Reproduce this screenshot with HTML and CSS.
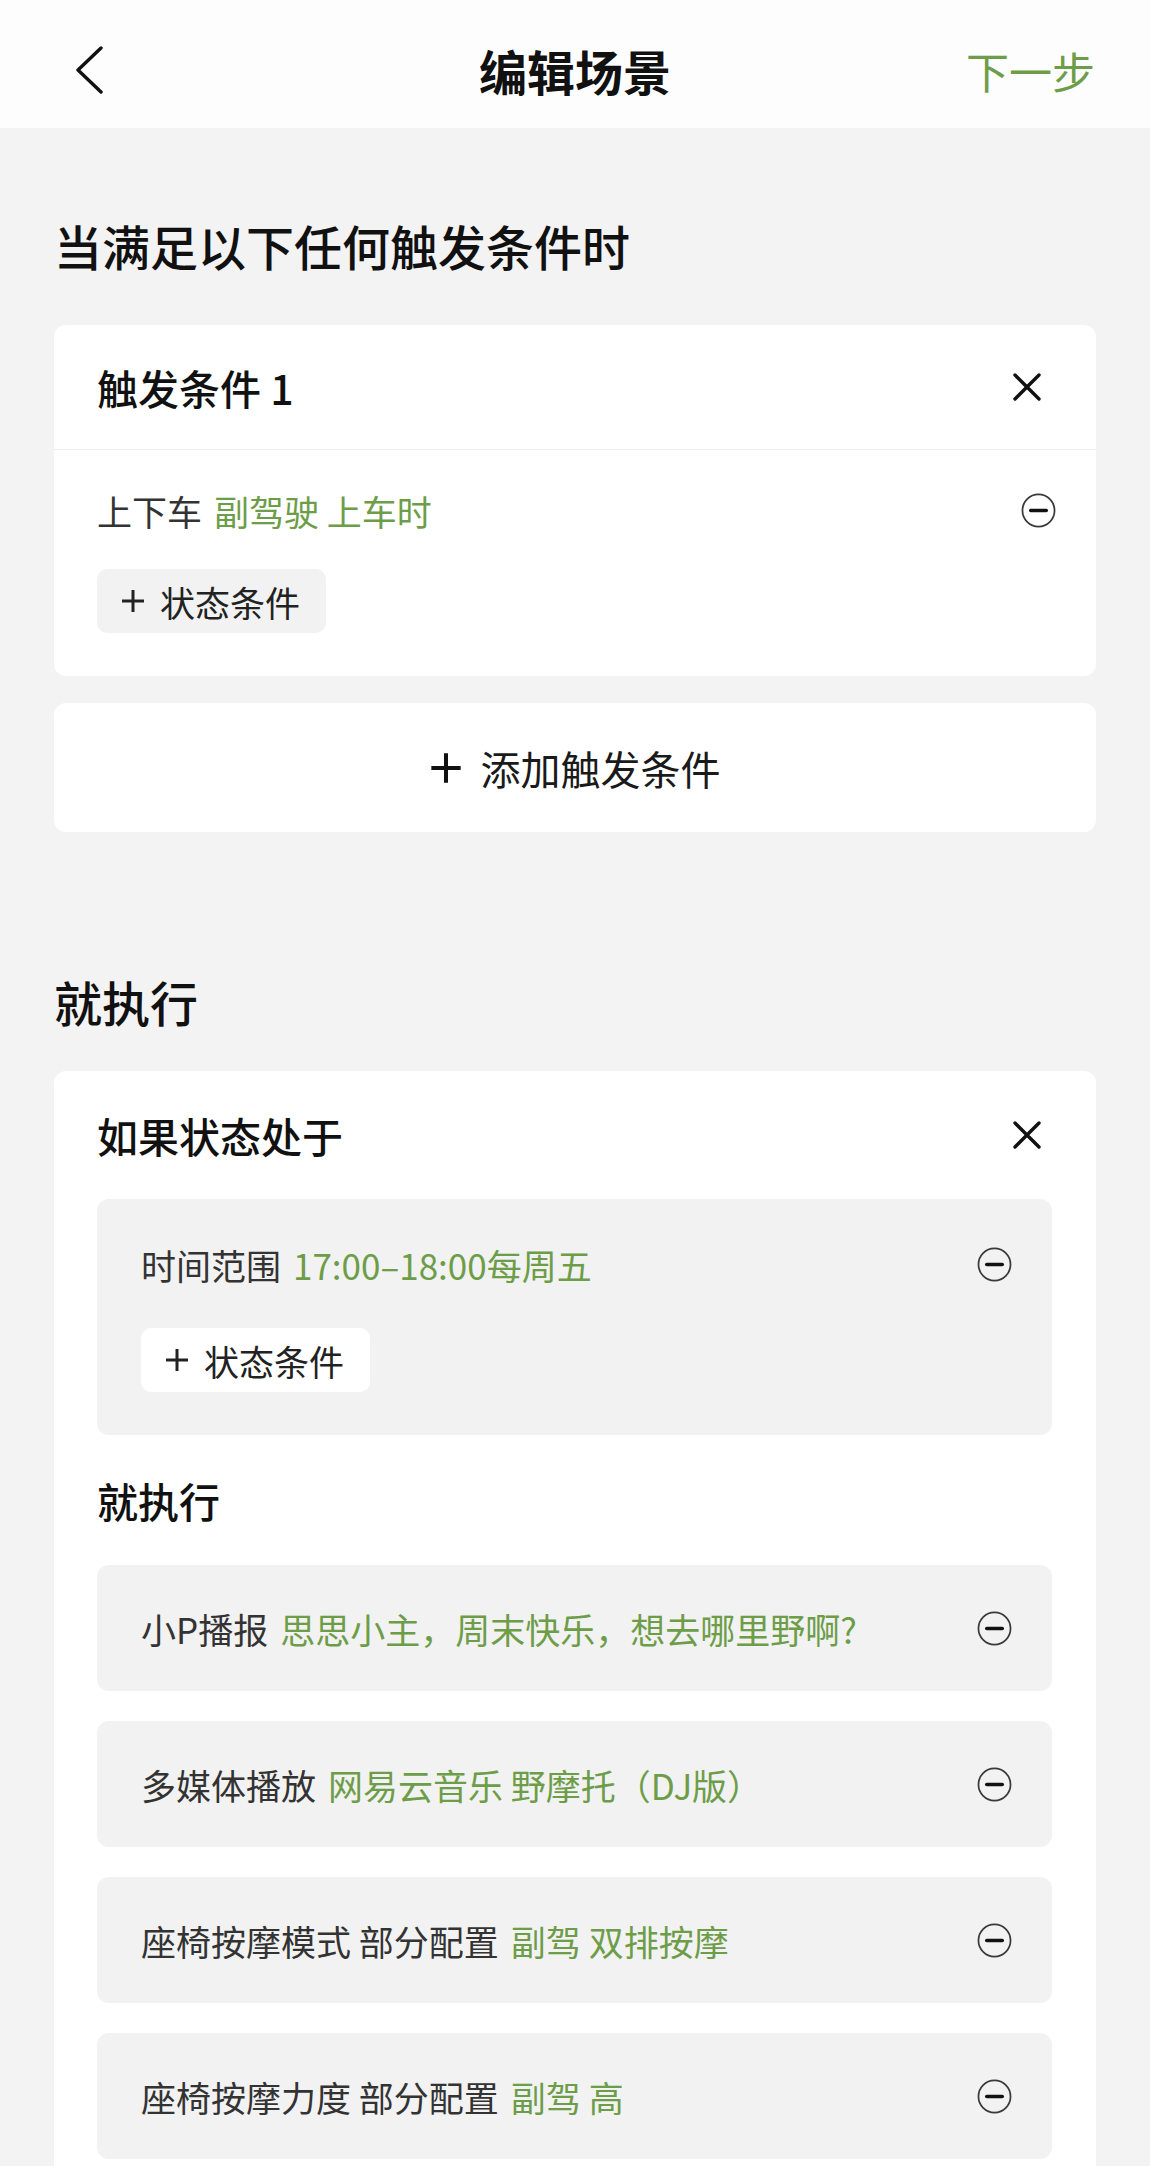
FILE: index.html
```html
<!DOCTYPE html>
<html lang="zh-CN">
<head>
    <meta charset="UTF-8">
    <meta name="viewport" content="width=device-width, initial-scale=1.0">
    <title>编辑场景</title>
    <link rel="stylesheet" href="styles.css">
</head>
<body>
    <svg class="sprite" xmlns="http://www.w3.org/2000/svg">
        <symbol id="icon-remove" viewBox="0 0 36 36">
            <circle cx="18" cy="18" r="16.5" fill="none" stroke="#3a3a3a" stroke-width="1.8"/>
            <line x1="10" y1="18" x2="26" y2="18" stroke="#111" stroke-width="3.6" stroke-linecap="round"/>
        </symbol>
        <symbol id="icon-close" viewBox="0 0 30 30">
            <path d="M3 3 L27 27 M27 3 L3 27" fill="none" stroke="#111" stroke-width="3.4" stroke-linecap="round"/>
        </symbol>
        <symbol id="icon-plus" viewBox="0 0 24 24">
            <path d="M12 1 V23 M1 12 H23" fill="none" stroke="currentColor" stroke-width="3"/>
        </symbol>
    </svg>

    <header class="nav-bar">
        <button class="nav-back" aria-label="返回">
            <svg width="28" height="48" viewBox="0 0 28 48">
                <path d="M25 2 L2 24 L25 46" fill="none" stroke="#111" stroke-width="3.4" stroke-linecap="round" stroke-linejoin="round"/>
            </svg>
        </button>
        <h1 class="nav-title">编辑场景</h1>
        <a href="#" class="nav-next">下一步</a>
    </header>

    <main class="content">
        <h2 class="section-title section-title-first">当满足以下任何触发条件时</h2>

        <div class="card">
            <div class="card-head card-head-divided">
                <span class="card-title">触发条件 1</span>
                <svg class="close-icon"><use href="#icon-close"/></svg>
            </div>
            <div class="card-body">
                <div class="cond-row">
                    <span class="cond-text">上下车<span class="cond-value">副驾驶 上车时</span></span>
                    <svg class="remove-icon"><use href="#icon-remove"/></svg>
                </div>
                <button class="chip">
                    <svg class="chip-plus"><use href="#icon-plus"/></svg>
                    状态条件
                </button>
            </div>
        </div>

        <button class="add-trigger">
            <svg class="add-plus"><use href="#icon-plus"/></svg>
            添加触发条件
        </button>

        <h2 class="section-title section-title-second">就执行</h2>

        <div class="card card-actions">
            <div class="card-head">
                <span class="card-title">如果状态处于</span>
                <svg class="close-icon"><use href="#icon-close"/></svg>
            </div>

            <div class="state-box">
                <div class="cond-row">
                    <span class="cond-text">时间范围<span class="cond-value">17:00–18:00每周五</span></span>
                    <svg class="remove-icon"><use href="#icon-remove"/></svg>
                </div>
                <button class="chip chip-white">
                    <svg class="chip-plus"><use href="#icon-plus"/></svg>
                    状态条件
                </button>
            </div>

            <h3 class="sub-title">就执行</h3>

            <div class="action-list">
                <div class="action-row">
                    <span class="cond-text">小P播报<span class="cond-value">思思小主，周末快乐，想去哪里野啊?</span></span>
                    <svg class="remove-icon"><use href="#icon-remove"/></svg>
                </div>
                <div class="action-row">
                    <span class="cond-text">多媒体播放<span class="cond-value">网易云音乐 野摩托（DJ版）</span></span>
                    <svg class="remove-icon"><use href="#icon-remove"/></svg>
                </div>
                <div class="action-row">
                    <span class="cond-text">座椅按摩模式 部分配置<span class="cond-value">副驾 双排按摩</span></span>
                    <svg class="remove-icon"><use href="#icon-remove"/></svg>
                </div>
                <div class="action-row">
                    <span class="cond-text">座椅按摩力度 部分配置<span class="cond-value">副驾 高</span></span>
                    <svg class="remove-icon"><use href="#icon-remove"/></svg>
                </div>
            </div>
        </div>
    </main>
</body>
</html>
```

FILE: styles.css
```css
body {
    margin: 0;
    font-family: "Noto Sans CJK SC", "Noto Sans", sans-serif;
    background-color: #f3f3f3;
    color: #111;
}
.sprite {
    display: none;
}
button {
    font-family: inherit;
    border: none;
    background: none;
    padding: 0;
    color: inherit;
}

/* top navigation */
.nav-bar {
    display: grid;
    grid-template-columns: 1fr auto 1fr;
    align-items: center;
    height: 128px;
    padding: 12px 55px 0 55px;
    box-sizing: border-box;
    background-color: #fdfdfd;
}
.nav-back {
    justify-self: start;
    display: flex;
    padding-left: 21px;
}
.nav-title {
    margin: 0;
    font-size: 48px;
    font-weight: 600;
    line-height: 1;
}
.nav-next {
    justify-self: end;
    font-size: 43px;
    line-height: 1;
    color: #6d9d48;
    text-decoration: none;
}

.content {
    padding: 0 54px;
}
.section-title {
    margin: 0;
    font-size: 48px;
    font-weight: 500;
    line-height: 67px;
}
.section-title-first {
    margin-top: 84px;
    margin-bottom: 46px;
}
.section-title-second {
    margin-top: 136px;
    margin-bottom: 36px;
}

/* cards */
.card {
    background-color: #fff;
    border-radius: 12px;
}
.card-head {
    display: flex;
    align-items: center;
    justify-content: space-between;
    height: 124px;
    padding: 0 54px 0 43px;
}
.card-head-divided {
    border-bottom: 1px solid #efefef;
}
.card-title {
    font-size: 41px;
    font-weight: 500;
}
.close-icon {
    width: 30px;
    height: 30px;
}
.card-body {
    padding: 35px 40px 43px 43px;
}
.cond-row {
    display: flex;
    align-items: center;
    justify-content: space-between;
    height: 50px;
}
.cond-text {
    font-size: 35px;
    color: #333;
}
.cond-value {
    margin-left: 12px;
    color: #6d9d48;
}
.remove-icon {
    width: 35px;
    height: 35px;
    flex-shrink: 0;
}
.chip {
    display: flex;
    align-items: center;
    gap: 15px;
    height: 64px;
    margin-top: 34px;
    padding: 0 26px 0 24px;
    border-radius: 10px;
    background-color: #f2f2f2;
    font-size: 35px;
    color: #222;
}
.chip-white {
    background-color: #fff;
    margin-top: 39px;
}
.chip-plus {
    width: 24px;
    height: 24px;
    color: #222;
}

.add-trigger {
    display: flex;
    align-items: center;
    justify-content: center;
    gap: 19px;
    width: 100%;
    height: 129px;
    margin-top: 27px;
    border-radius: 12px;
    background-color: #fff;
    font-size: 40px;
    color: #1a1a1a;
}
.add-plus {
    width: 32px;
    height: 32px;
    color: #111;
}
.add-plus use {
    stroke-width: 4;
}

/* execute card */
.card-actions {
    padding: 0 44px 40px 43px;
}
.card-actions .card-head {
    height: 128px;
    padding: 0 10px 0 0;
}
.state-box {
    padding: 40px 40px 43px 44px;
    border-radius: 12px;
    background-color: #f2f2f2;
}
.sub-title {
    margin: 36px 0 36px;
    font-size: 41px;
    font-weight: 500;
    line-height: 58px;
}
.action-list {
    display: flex;
    flex-direction: column;
    gap: 30px;
}
.action-row {
    display: flex;
    align-items: center;
    justify-content: space-between;
    height: 126px;
    padding: 0 40px 0 44px;
    border-radius: 12px;
    background-color: #f2f2f2;
}
```
